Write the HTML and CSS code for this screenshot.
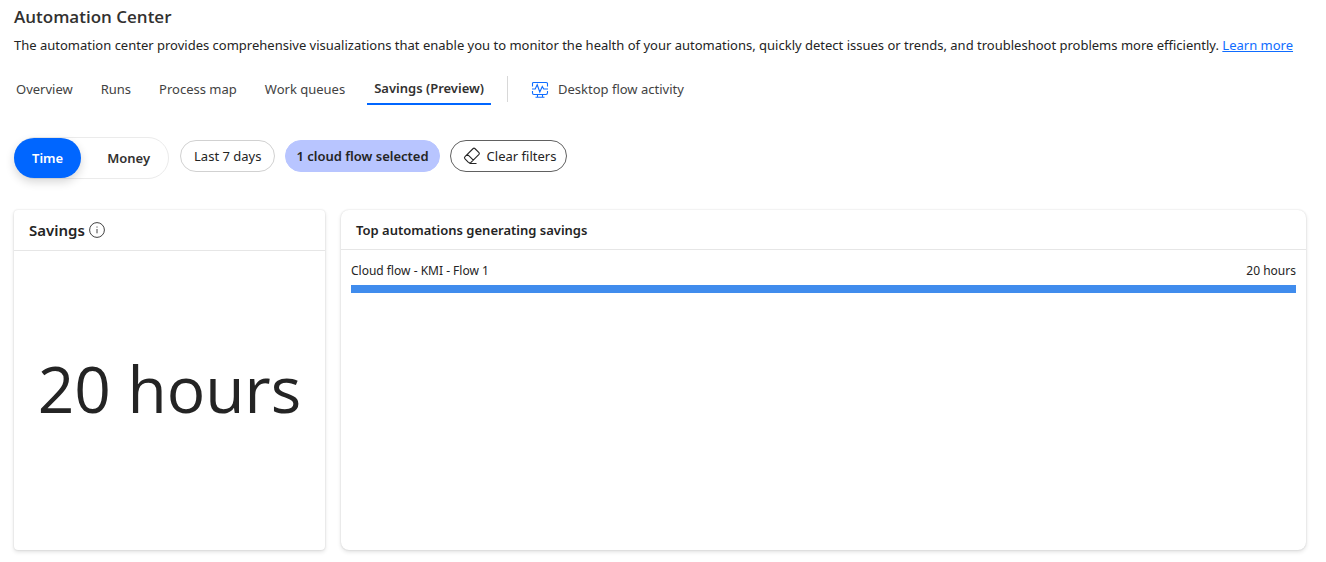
FILE: index.html
```
<!DOCTYPE html>
<html lang="en">
<head>
<meta charset="utf-8">
<meta name="viewport" content="width=device-width, initial-scale=1">
<title>Automation Center</title>
<link rel="stylesheet" href="styles.css">
</head>
<body>
<main class="page">
  <header class="intro">
    <h1 class="title">Automation Center</h1>
    <p class="subtitle">The automation center provides comprehensive visualizations that enable you to monitor the health of your automations, quickly detect issues or trends, and troubleshoot problems more efficiently. <a class="link" href="#">Learn more</a></p>
  </header>

  <nav class="tabs" aria-label="Automation Center views">
    <button class="tab" type="button">Overview</button>
    <button class="tab" type="button">Runs</button>
    <button class="tab" type="button">Process map</button>
    <button class="tab" type="button">Work queues</button>
    <button class="tab tab-active" type="button" aria-current="page">Savings (Preview)</button>
    <span class="divider"></span>
    <button class="tab tab-icon" type="button">
      <svg class="icon-desktop" viewBox="0 0 18 18" aria-hidden="true"><path d="M1.5 6.5V3.2Q1.5 2.5 2.7 2.5H15.3Q16.5 2.5 16.5 3.5V6.5M16.5 11V12.8Q16.5 14.5 15 14.5H3Q1.5 14.5 1.5 13V11M1 9H4.2L6.2 4.8 8.8 12 11.3 6.5 12.7 9H17M6.5 14.5V17M11.5 14.5V17M4.5 17.3H13.5"/></svg>
      Desktop flow activity
    </button>
  </nav>

  <div class="filters">
    <div class="toggle" role="group" aria-label="Savings unit">
      <button class="toggle-item toggle-on" type="button" aria-pressed="true">Time</button>
      <button class="toggle-item" type="button" aria-pressed="false">Money</button>
    </div>
    <div class="pills">
      <button class="pill pill-range" type="button">Last 7 days</button>
      <button class="pill pill-selected" type="button">1 cloud flow selected</button>
      <button class="pill pill-clear" type="button">
        <svg class="icon-eraser" viewBox="0 0 18 18" aria-hidden="true"><path d="M10.2 1.5Q11 .8 11.8 1.5L16 5.7Q16.7 6.5 16 7.3L8 15.3Q6.7 16.5 5.4 15.3L2 11.9Q.9 10.7 2 9.6ZM4.5 7.3 10.3 13.1M6.5 16.5H13.5"/></svg>
        Clear filters
      </button>
    </div>
  </div>

  <div class="cards">
    <section class="card card-total">
      <div class="card-head">
        <h2 class="card-title card-title-large">Savings</h2>
        <button class="info" type="button" aria-label="About savings">
          <svg class="icon-info" viewBox="0 0 16 16" aria-hidden="true"><circle cx="8" cy="8" r="7.4"/><path d="M8 7V11.3M8 4.5V5.6"/></svg>
        </button>
      </div>
      <p class="total">20 hours</p>
    </section>
    <section class="card card-top">
      <div class="card-head">
        <h2 class="card-title">Top automations generating savings</h2>
      </div>
      <div class="chart">
        <div class="chart-row"><span>Cloud flow - KMI - Flow 1</span><span>20 hours</span></div>
        <div class="bar"><div class="bar-fill" style="width: 100%"></div></div>
      </div>
    </section>
  </div>
</main>
</body>
</html>
```
FILE: styles.css
```
* { box-sizing: border-box; }

body {
  margin: 0;
  background: #fff;
  color: #242424;
  font: 13px/20px "Noto Sans", "Open Sans", sans-serif;
}

button {
  margin: 0;
  padding: 0;
  border: 0;
  background: none;
  color: inherit;
  font: inherit;
  white-space: nowrap;
  cursor: pointer;
}

svg { fill: none; stroke: currentColor; flex: none; }

.page {
  display: flex;
  flex-direction: column;
  min-height: 100vh;
  padding: 5px 20px 12px 14px;
}

.title {
  margin: 0;
  font-family: "Open Sans", "Noto Sans", sans-serif;
  font-size: 17px;
  line-height: 24px;
  font-weight: 600;
  color: #323130;
}
.subtitle { margin: 6px 0 0; }
.link { color: #0f6cff; text-decoration: underline; }

.tabs {
  display: flex;
  align-items: center;
  gap: 16px;
  margin-top: 18px;
  color: #424242;
}
.tab { display: flex; align-items: center; height: 32px; padding: 0 6px; }
.tab:first-child { padding-left: 2px; }
.tab-active { padding: 0 7px; color: #323130; font-weight: 600; border-bottom: 2px solid #0066ff; }
.divider { width: 1px; height: 26px; background: #d8d8d8; }
.tab-icon { gap: 9px; padding-left: 7px; }
.icon-desktop { width: 18px; height: 18px; color: #0f6cff; stroke-width: 1.1; }

.filters { display: flex; align-items: flex-start; gap: 11px; margin-top: 32px; }
.toggle {
  display: flex;
  height: 42px;
  border: 1px solid #ebebeb;
  border-radius: 21px;
}
.toggle-item { padding: 0 18px 0 26px; font-weight: 600; color: #323130; }
.toggle-on {
  padding: 0 18px;
  margin-left: -1px;
  border-radius: 20px;
  background: #0066ff;
  color: #fff;
  box-shadow: 0 4px 10px rgba(0, 0, 0, .16);
}
.pills { display: flex; gap: 10px; padding-top: 3px; }
.pill {
  display: flex;
  align-items: center;
  height: 32px;
  padding: 0 13px;
  border: 1px solid #d1d1d1;
  border-radius: 16px;
}
.pill-selected { padding: 0 10px; border-color: #b8c5ff; background: #b8c5ff; font-weight: 600; }
.pill-clear { gap: 6px; padding: 0 10px 0 12px; border-color: #616161; }
.icon-eraser { width: 18px; height: 18px; stroke-width: 1.1; }

.cards {
  display: grid;
  grid-template-columns: 311px 1fr;
  gap: 16px;
  flex: 1;
  margin-top: 31px;
}
.card {
  display: flex;
  flex-direction: column;
  border-radius: 8px;
  background: #fff;
  box-shadow: 0 0 2px rgba(0, 0, 0, .14), 0 2px 4px rgba(0, 0, 0, .12);
}
.card-total { border-radius: 4px; }
.card-head {
  display: flex;
  align-items: center;
  gap: 4px;
  height: 40px;
  padding: 0 15px;
  border-bottom: 1px solid #e6e6e6;
}
.card-total .card-head { height: 41px; }
.card-title { margin: 0; font-size: 13px; font-weight: 600; }
.card-title-large { font-size: 15px; }
.info { display: flex; }
.icon-info { width: 16px; height: 16px; color: #424242; }
.total {
  flex: 1;
  display: flex;
  align-items: center;
  justify-content: center;
  margin: 0;
  padding-bottom: 24px;
  font-family: "Open Sans", "Noto Sans", sans-serif;
  font-size: 64px;
  line-height: 80px;
}
.chart { padding: 13px 10px; }
.chart-row { display: flex; justify-content: space-between; font-size: 12px; line-height: 16px; }
.bar { margin-top: 6px; }
.bar-fill { height: 8px; background: #408ced; }
```
